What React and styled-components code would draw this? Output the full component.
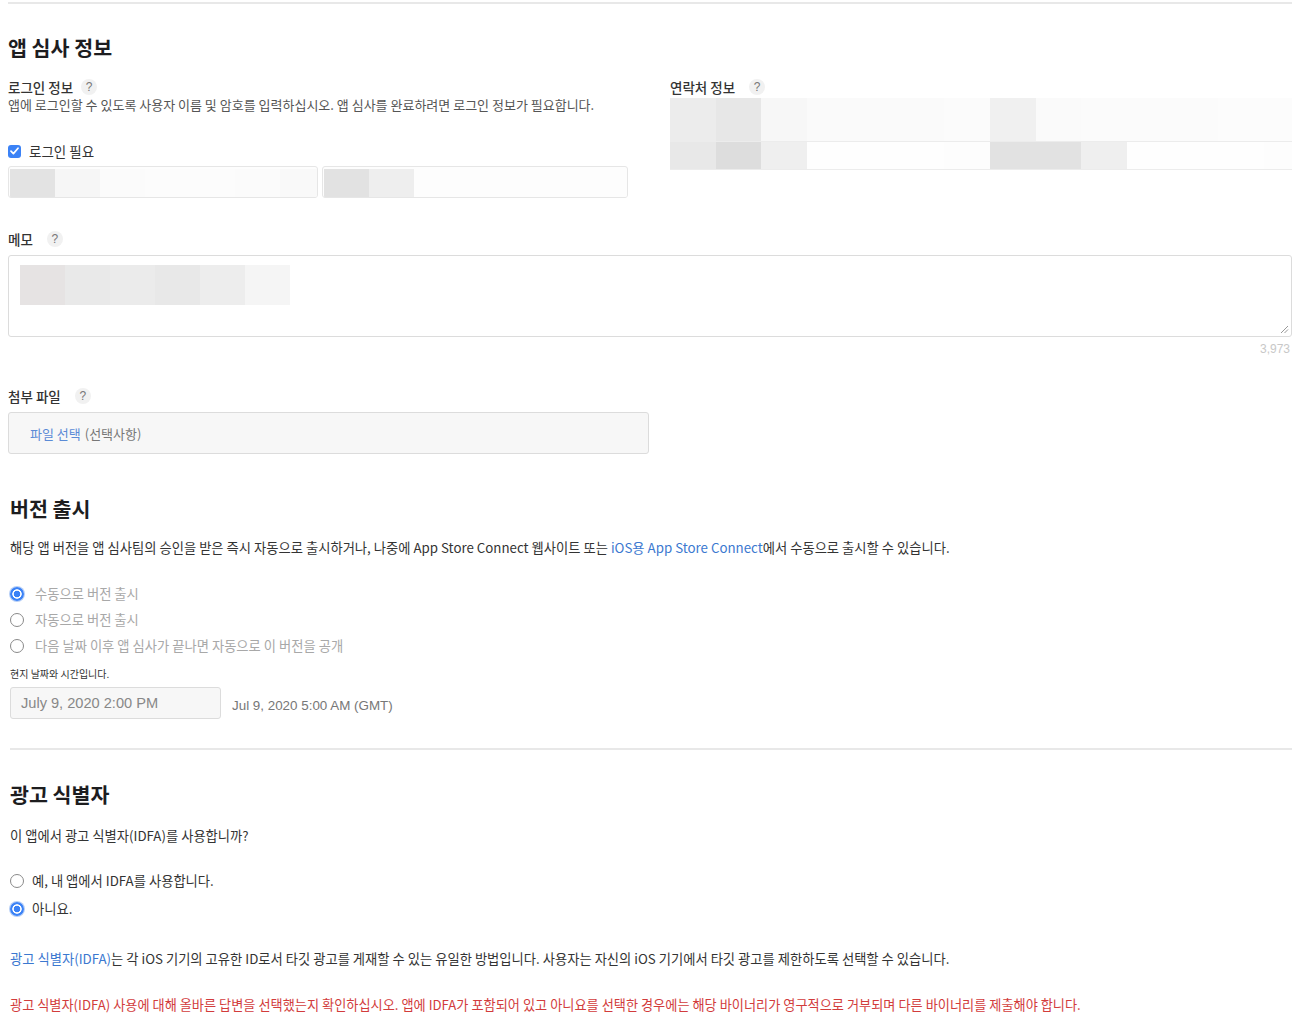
import React from 'react';
import styled, { createGlobalStyle } from 'styled-components';

const GlobalStyle = createGlobalStyle`
  html, body {
    margin: 0;
    padding: 0;
    background: #fff;
  }
  body {
    font-family: "Noto Sans CJK KR", "Noto Sans", "Liberation Sans", sans-serif;
    color: #333;
  }
`;

const Page = styled.div`
  width: 1292px;
  padding-top: 2px;
  box-sizing: border-box;
`;

const Rule = styled.hr`
  border: none;
  height: 2px;
  background: #e8e8e8;
  margin: 0 0 0 ${p => p.$indent || 8}px;
`;

const Section = styled.section`
  padding-left: ${p => p.$indent || 8}px;
`;

const Heading = styled.h2`
  margin: 0;
  font-size: 20.6px;
  font-weight: 700;
  color: #1d1d1f;
  line-height: 28px;
`;

const TwoCols = styled.div`
  display: grid;
  grid-template-columns: 620px 622px;
  column-gap: 42px;
`;

const Label = styled.div`
  display: flex;
  align-items: center;
  gap: ${p => p.$gap || 8}px;
  font-size: 13.5px;
  font-weight: 500;
  color: #333;
  line-height: 18px;
`;

const Help = styled.span`
  width: 16px;
  height: 16px;
  border-radius: 50%;
  background: #f1f1f1;
  color: #777;
  font-size: 12px;
  font-family: "Liberation Sans", sans-serif;
  display: inline-flex;
  align-items: center;
  justify-content: center;
`;

const Desc = styled.p`
  margin: 0;
  font-size: 13px;
  color: #555;
  line-height: 18px;
`;

const CheckRow = styled.label`
  display: flex;
  align-items: center;
  gap: 8px;
  font-size: 13.5px;
  color: #333;
`;

const CheckBox = styled.span`
  width: 13px;
  height: 13px;
  border-radius: 3px;
  background: #3b82f6;
  display: inline-flex;
  align-items: center;
  justify-content: center;
`;

const InputPair = styled.div`
  display: grid;
  grid-template-columns: 310px 306px;
  gap: 4px;
`;

const FieldBox = styled.div`
  height: 32px;
  border: 1px solid #e6e6e6;
  border-radius: 3px;
  box-sizing: border-box;
  display: flex;
  align-items: stretch;
  padding: 2px 0 0 1px;
  background: #fdfdfd;
  overflow: hidden;
`;

const Pixel = styled.span`
  width: ${p => p.$w || 45}px;
  flex: none;
  background: ${p => p.$c};
`;

const ContactGrid = styled.div`
  display: grid;
  grid-template-rows: 44px 28px;
  margin-top: 2px;
`;

const ContactRow = styled.div`
  display: flex;
  border-bottom: 1px solid #ececec;
  overflow: hidden;
`;

const MemoBox = styled.div`
  position: relative;
  height: 82px;
  border: 1px solid #dcdcdc;
  border-radius: 3px;
  box-sizing: border-box;
  padding: 9px 0 0 11px;
  display: flex;
  align-items: flex-start;
`;

const MemoPixels = styled.div`
  display: flex;
  height: 40px;
`;

const Grip = styled.svg`
  position: absolute;
  right: 2px;
  bottom: 2px;
`;

const Counter = styled.div`
  text-align: right;
  font-size: 12px;
  color: #c8c8c8;
  font-family: "Liberation Sans", sans-serif;
  line-height: 16px;
  margin: 4px 2px 0 0;
`;

const FileBox = styled.div`
  width: 641px;
  height: 42px;
  border: 1px solid #dcdcdc;
  border-radius: 3px;
  background: #f7f7f7;
  box-sizing: border-box;
  display: flex;
  align-items: center;
  padding-left: 21px;
  font-size: 13px;
  color: #777;
`;

const Link = styled.span`
  color: ${p => p.$muted ? '#5b8bd6' : '#3b78d0'};
  margin-right: ${p => p.$gap || 0}px;
`;

const Body = styled.p`
  margin: 0;
  font-size: ${p => p.$red ? 13.2 : 13.3}px;
  color: ${p => p.$red ? '#d23c3c' : '#333'};
  line-height: 18px;
`;

const RadioList = styled.div`
  display: flex;
  flex-direction: column;
  gap: ${p => p.$gap || 8}px;
`;

const RadioRow = styled.div`
  display: flex;
  align-items: center;
  gap: ${p => p.$gap || 11}px;
  font-size: 13.3px;
  color: ${p => p.$dim ? '#a8a8a8' : '#333'};
  line-height: 18px;
`;

const RadioDot = styled.span`
  width: 14px;
  height: 14px;
  border-radius: 50%;
  box-sizing: border-box;
  flex: none;
  border: ${p => p.$on ? 'none' : '1.5px solid #8a8a8a'};
  background: ${p => p.$on
    ? 'radial-gradient(circle, #3b82f6 0 3px, #fff 3.6px 4.4px, #3b82f6 5px)'
    : '#fff'};
  box-shadow: ${p => p.$on ? '0 0 0 1px #b6cff7' : 'none'};
`;

const Small = styled.div`
  font-size: 10px;
  color: #333;
  line-height: 14px;
`;

const DateRow = styled.div`
  display: flex;
  align-items: center;
  gap: 11px;
`;

const DateInput = styled.div`
  width: 211px;
  height: 32px;
  border: 1px solid #dcdcdc;
  border-radius: 3px;
  background: #f7f7f7;
  box-sizing: border-box;
  display: flex;
  align-items: center;
  padding-left: 10px;
  font-size: 14.6px;
  color: #888;
  font-family: "Liberation Sans", sans-serif;
`;

const DateNote = styled.span`
  font-size: 13.4px;
  color: #777;
  font-family: "Liberation Sans", sans-serif;
  padding-top: 4px;
`;

const Spacer = styled.div`
  height: ${p => p.$h}px;
`;

const loginA = ['#e3e3e3', '#f6f6f6', '#fbfbfb', '#fcfcfc', '#fcfcfc', '#fbfbfb', '#f9f9f9'];
const loginB = ['#e2e2e2', '#eeeeee', '#fdfdfd', '#fdfdfd', '#fdfdfd', '#fdfdfd', '#fdfdfd'];
const contactTop = ['#ececec', '#e7e7e7', '#f7f7f7', '#fafafa', '#fafafa', '#fafafa', '#fbfbfb', '#f0f0f0', '#fafafa', '#fbfbfb', '#fbfbfb', '#fbfbfb', '#fcfcfc', '#fcfcfc'];
const contactBottom = ['#e8e8e8', '#dddddd', '#efefef', '#fefefe', '#fefefe', '#fefefe', '#fdfdfd', '#e2e2e2', '#e2e2e2', '#efefef', '#fefefe', '#fefefe', '#fefefe', '#fdfdfd'];
const memoPx = ['#e6e3e3', '#e9e9e9', '#ebebeb', '#e8e8e8', '#ededed', '#f5f5f5'];

const Pixels = ({ colors, w }) => colors.map((c, i) => <Pixel key={i} $c={c} $w={w} />);

export default function App() {
  return (
    <Page>
      <GlobalStyle />
      <Rule />
      <Section>
        <Spacer $h={29} />
        <Heading>앱 심사 정보</Heading>
        <Spacer $h={17} />
        <TwoCols>
          <div>
            <Label>로그인 정보 <Help>?</Help></Label>
            <Desc>앱에 로그인할 수 있도록 사용자 이름 및 암호를 입력하십시오. 앱 심사를 완료하려면 로그인 정보가 필요합니다.</Desc>
            <Spacer $h={27} />
            <CheckRow>
              <CheckBox>
                <svg width="9" height="8" viewBox="0 0 9 8">
                  <path d="M1 4.2 L3.4 6.6 L8 1.2" fill="none" stroke="#fff" strokeWidth="1.7" strokeLinecap="round" strokeLinejoin="round" />
                </svg>
              </CheckBox>
              로그인 필요
            </CheckRow>
            <Spacer $h={5} />
            <InputPair>
              <FieldBox><Pixels colors={loginA} /></FieldBox>
              <FieldBox><Pixels colors={loginB} /></FieldBox>
            </InputPair>
          </div>
          <div>
            <Label $gap={14}>연락처 정보 <Help>?</Help></Label>
            <ContactGrid>
              <ContactRow><Pixels colors={contactTop} w={45.7} /></ContactRow>
              <ContactRow><Pixels colors={contactBottom} w={45.7} /></ContactRow>
            </ContactGrid>
          </div>
        </TwoCols>
        <Spacer $h={32} />
        <Label $gap={14}>메모 <Help>?</Help></Label>
        <Spacer $h={7} />
        <MemoBox>
          <MemoPixels><Pixels colors={memoPx} /></MemoPixels>
          <Grip width="9" height="9" viewBox="0 0 9 9">
            <path d="M1 8 L8 1 M4.5 8 L8 4.5" stroke="#999" strokeWidth="1" />
          </Grip>
        </MemoBox>
        <Counter>3,973</Counter>
        <Spacer $h={30} />
        <Label $gap={14}>첨부 파일 <Help>?</Help></Label>
        <Spacer $h={7} />
        <FileBox><Link $muted $gap={4}>파일 선택</Link>(선택사항)</FileBox>
      </Section>

      <Section $indent={10}>
        <Spacer $h={40} />
        <Heading>버전 출시</Heading>
        <Spacer $h={17} />
        <Body>해당 앱 버전을 앱 심사팀의 승인을 받은 즉시 자동으로 출시하거나, 나중에 App Store Connect 웹사이트 또는 <Link>iOS용 App Store Connect</Link>에서 수동으로 출시할 수 있습니다.</Body>
        <Spacer $h={28} />
        <RadioList>
          <RadioRow $dim><RadioDot $on />수동으로 버전 출시</RadioRow>
          <RadioRow $dim><RadioDot />자동으로 버전 출시</RadioRow>
          <RadioRow $dim><RadioDot />다음 날짜 이후 앱 심사가 끝나면 자동으로 이 버전을 공개</RadioRow>
        </RadioList>
        <Spacer $h={12} />
        <Small>현지 날짜와 시간입니다.</Small>
        <Spacer $h={6} />
        <DateRow>
          <DateInput>July 9, 2020 2:00 PM</DateInput>
          <DateNote>Jul 9, 2020 5:00 AM (GMT)</DateNote>
        </DateRow>
      </Section>

      <Spacer $h={29} />
      <Rule $indent={10} />

      <Section $indent={10}>
        <Spacer $h={30} />
        <Heading>광고 식별자</Heading>
        <Spacer $h={19} />
        <Body>이 앱에서 광고 식별자(IDFA)를 사용합니까?</Body>
        <Spacer $h={27} />
        <RadioList $gap={10}>
          <RadioRow $gap={8}><RadioDot />예, 내 앱에서 IDFA를 사용합니다.</RadioRow>
          <RadioRow $gap={8}><RadioDot $on />아니요.</RadioRow>
        </RadioList>
        <Spacer $h={32} />
        <Body><Link>광고 식별자(IDFA)</Link>는 각 iOS 기기의 고유한 ID로서 타깃 광고를 게재할 수 있는 유일한 방법입니다. 사용자는 자신의 iOS 기기에서 타깃 광고를 제한하도록 선택할 수 있습니다.</Body>
        <Spacer $h={28} />
        <Body $red>광고 식별자(IDFA) 사용에 대해 올바른 답변을 선택했는지 확인하십시오. 앱에 IDFA가 포함되어 있고 아니요를 선택한 경우에는 해당 바이너리가 영구적으로 거부되며 다른 바이너리를 제출해야 합니다.</Body>
      </Section>
    </Page>
  );
}
